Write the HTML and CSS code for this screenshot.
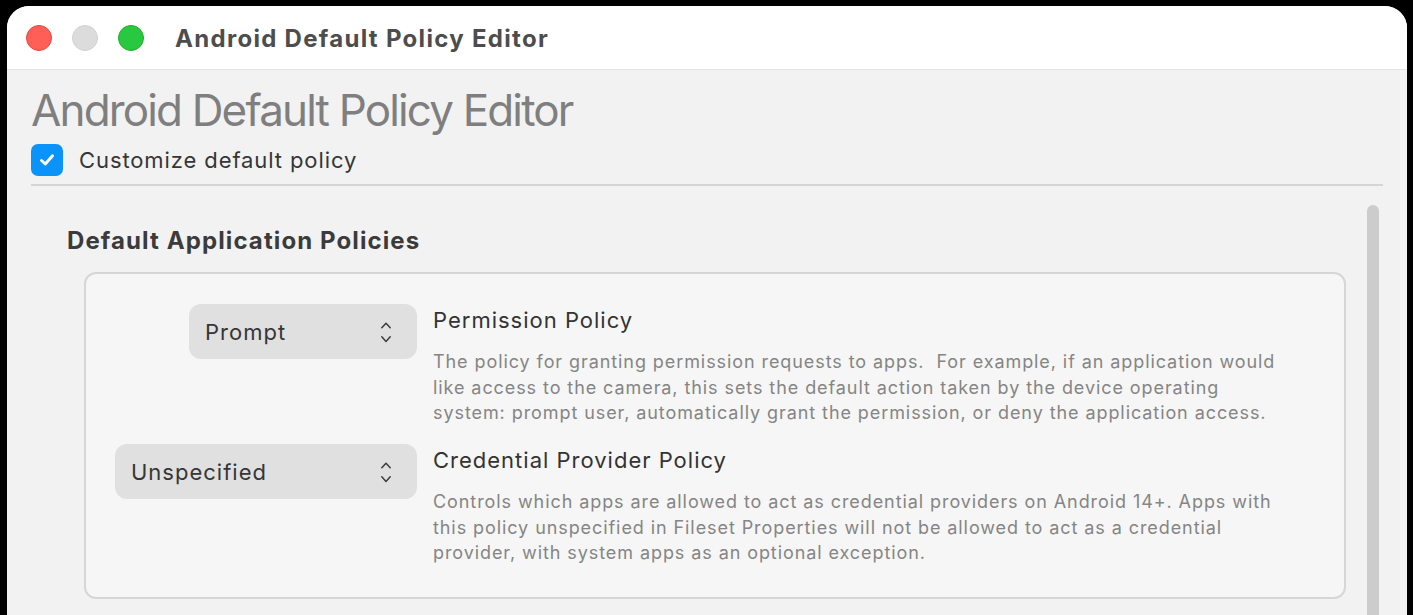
FILE: index.html
```html
<!DOCTYPE html>
<html>
    <head>
        <title>Android Default Policy Editor</title>
        <link rel="stylesheet" href="styles.css">
    </head>
    <body>
        <div class="window">
            <div class="titlebar">
                <div class="lights">
                    <span class="light red"></span>
                    <span class="light gray"></span>
                    <span class="light green"></span>
                </div>
                <div class="win-title">Android Default Policy Editor</div>
            </div>
            <div class="content">
                <h1 class="page-title">Android Default Policy Editor</h1>
                <label class="check-row">
                    <span class="checkbox">
                        <svg width="20" height="20" viewBox="0 0 20 20"><path d="M4.5 10.5 L8.3 14 L15.5 5.8" fill="none" stroke="#fff" stroke-width="3" stroke-linecap="round" stroke-linejoin="round"/></svg>
                    </span>
                    <span class="check-label">Customize default policy</span>
                </label>
                <div class="divider"></div>
                <div class="scroll-area">
                    <div class="section">
                        <h2 class="section-title">Default Application Policies</h2>
                        <div class="policy-box">
                            <div class="policy-row">
                                <div class="control-col">
                                    <div class="popup popup-short">
                                        <span>Prompt</span>
                                        <svg class="chev" width="12" height="24" viewBox="0 0 12 24"><path d="M1.8 7.8 L6 3.2 L10.2 7.8 M1.8 16.8 L6 21.4 L10.2 16.8" fill="none" stroke="#3c3c3c" stroke-width="1.5" stroke-linecap="round" stroke-linejoin="round"/></svg>
                                    </div>
                                </div>
                                <div class="text-col">
                                    <div class="policy-name">Permission Policy</div>
                                    <p class="policy-desc">The policy for granting permission requests to apps.&nbsp; For example, if an application would like access to the camera, this sets the default action taken by the device operating system: prompt user, automatically grant the permission, or deny the application access.</p>
                                </div>
                            </div>
                            <div class="policy-row">
                                <div class="control-col">
                                    <div class="popup">
                                        <span>Unspecified</span>
                                        <svg class="chev" width="12" height="24" viewBox="0 0 12 24"><path d="M1.8 7.8 L6 3.2 L10.2 7.8 M1.8 16.8 L6 21.4 L10.2 16.8" fill="none" stroke="#3c3c3c" stroke-width="1.5" stroke-linecap="round" stroke-linejoin="round"/></svg>
                                    </div>
                                </div>
                                <div class="text-col">
                                    <div class="policy-name">Credential Provider Policy</div>
                                    <p class="policy-desc">Controls which apps are allowed to act as credential providers on Android 14+. Apps with this policy unspecified in Fileset Properties will not be allowed to act as a credential provider, with system apps as an optional exception.</p>
                                </div>
                            </div>
                        </div>
                    </div>
                    <div class="scrollbar"></div>
                </div>
            </div>
        </div>
    </body>
</html>
```

FILE: styles.css
```css
html, body {
    margin: 0;
    height: 100%;
    background: #000;
    font-family: Inter, 'Noto Sans', sans-serif;
    overflow: hidden;
}
.window {
    margin: 6px 0 0 7px;
    width: 1400px;
    height: 609px;
    background: #f2f2f2;
    border-radius: 22px 22px 0 0;
    overflow: hidden;
}
.titlebar {
    height: 63px;
    background: #fff;
    border-bottom: 1px solid #e3e3e3;
    display: flex;
    align-items: center;
}
.lights {
    display: flex;
    gap: 20px;
    margin-left: 19px;
}
.light {
    width: 26px;
    height: 26px;
    border-radius: 50%;
    box-sizing: border-box;
}
.red { background: #ff5f57; border: 1px solid #e2463f; }
.gray { background: #dcdcdc; border: 1px solid #d1d1d1; }
.green { background: #28c840; border: 1px solid #1dad2b; }
.win-title {
    margin-left: 31px;
    padding-top: 2px;
    font-size: 24px;
    font-weight: 700;
    color: #4d4d4d;
    letter-spacing: 1.3px;
}
.content {
    padding: 0 24px 0 24px;
}
.page-title {
    margin: 14px 0 0 0;
    font-size: 44px;
    font-weight: 400;
    color: #7f7f7f;
    line-height: 52px;
    letter-spacing: -1.85px;
}
.check-row {
    display: flex;
    align-items: center;
    margin-top: 8px;
    height: 32px;
}
.checkbox {
    width: 32px;
    height: 32px;
    border-radius: 7px;
    background: #0a93fb;
    display: flex;
    align-items: center;
    justify-content: center;
}
.check-label {
    margin-left: 16px;
    font-size: 22px;
    color: #363636;
    letter-spacing: 0.9px;
}
.divider {
    margin-top: 8px;
    height: 2px;
    background: #d5d5d5;
}
.scroll-area {
    display: flex;
    padding-top: 17px;
}
.section {
    flex: 1;
    padding-left: 36px;
}
.section-title {
    margin: 22px 0 0 0;
    font-size: 24px;
    font-weight: 700;
    color: #3b3b3b;
    line-height: 32px;
    letter-spacing: 1.1px;
}
.policy-box {
    margin: 15px 21px 0 17px;
    height: 327px;
    box-sizing: border-box;
    border: 2px solid #d6d6d6;
    border-radius: 12px;
    background: #f6f6f6;
    padding: 30px 0 0 29px;
}
.policy-row {
    display: flex;
    gap: 16px;
    height: 140px;
}
.control-col {
    width: 302px;
    display: flex;
    justify-content: flex-end;
    align-items: flex-start;
}
.popup {
    width: 302px;
    height: 55px;
    box-sizing: border-box;
    border-radius: 12px;
    background: #e0e0e0;
    display: flex;
    align-items: center;
    justify-content: space-between;
    padding: 0 25px 0 16px;
    font-size: 22px;
    color: #363636;
    letter-spacing: 1px;
}
.popup-short {
    width: 228px;
}
.text-col {
    flex: 1;
    padding-top: 2px;
}
.policy-name {
    font-size: 22px;
    color: #333;
    line-height: 28px;
    letter-spacing: 1px;
}
.policy-desc {
    margin: 15px 0 0 0;
    width: 852px;
    font-size: 18px;
    line-height: 25.5px;
    color: #858585;
    letter-spacing: 0.92px;
}
.scrollbar {
    width: 12px;
    height: 420px;
    margin: 2px 4px 0 0;
    background: #cccccc;
    border-radius: 6px;
}
```
